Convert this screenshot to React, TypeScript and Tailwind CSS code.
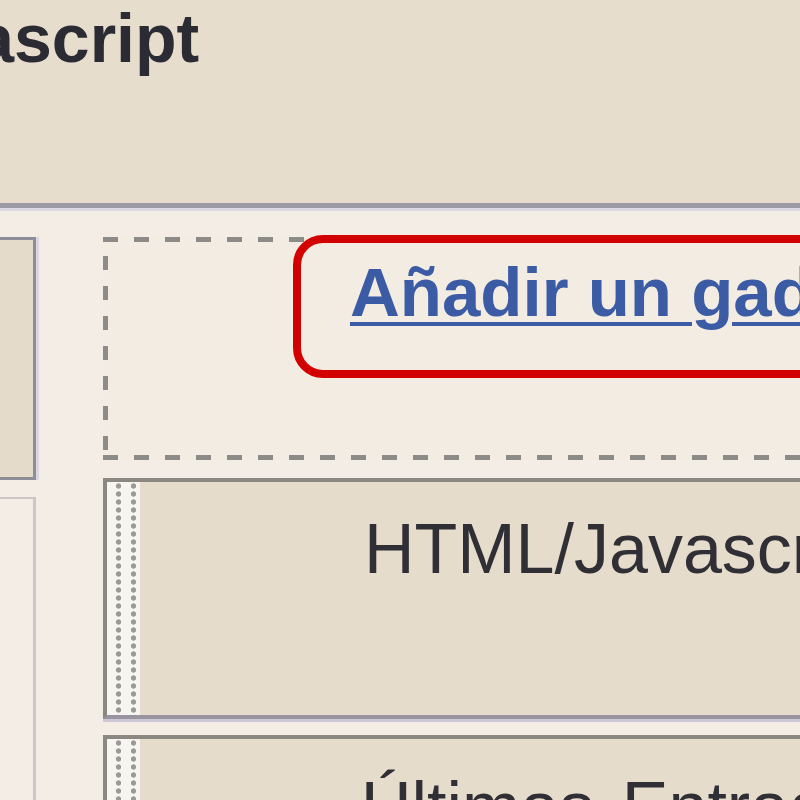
export default function App() {
  return (
    <div className="w-[800px] h-[800px] overflow-hidden bg-[#f3ede5] font-['Liberation_Sans',Arial,sans-serif]">
      {/* page title strip */}
      <div className="h-[203px] overflow-hidden bg-[#e6ddcd]">
        <h2 className="ml-[-345px] mt-[4px] whitespace-nowrap text-[68px] font-bold leading-[68px] text-[#2b2b33]">
          HTML/Javascript
        </h2>
      </div>
      <div className="h-[5px] bg-[#9c9aa2]" />
      <div className="h-[3px] bg-[#dcd8e2]" />

      <div className="flex gap-[67px] pt-[26px]">
        {/* sidebar column */}
        <div className="flex w-[36px] shrink-0 flex-col">
          <div className="h-[243px] border-y-[3px] border-r-[3px] border-[#8f8d97] bg-[#e5dbcb] shadow-[3px_0_0_#dcd6e2]" />
          <div className="mt-[17px] h-[400px] border-t-2 border-r-[3px] border-[#cbc6c8]" />
        </div>

        {/* main column */}
        <div className="flex w-[900px] shrink-0 flex-col">
          {/* dashed drop area */}
          <div className="h-[223px] p-[5px] [background:linear-gradient(90deg,#8d8b88_0_15px,transparent_0)_0_0/31px_5px_repeat-x,linear-gradient(90deg,#8d8b88_0_15px,transparent_0)_0_100%/31px_5px_repeat-x,linear-gradient(#8d8b88_0_14px,transparent_0)_0_19px/5px_30px_repeat-y,#f3ece3]">
            <div className="ml-[185px] -mt-[7px] h-[143px] rounded-[30px] border-[8px] border-[#d30000] pl-[49px] pt-[15px]">
              <a
                href="#"
                className="whitespace-nowrap text-[69px] font-bold leading-[69px] text-[#3b5ba5] underline decoration-[4px] underline-offset-[6px]"
              >
                Añadir un gadget
              </a>
            </div>
          </div>

          <div className="mt-[18px] flex h-[241px] border-[4px] border-[#8b8781] border-b-[#99949f] bg-[#e6dccc] shadow-[0_3px_0_#cdc8d6]">
            <div className="w-[33px] bg-[#f7f5f1] bg-[radial-gradient(circle,#9d9a95_2.3px,transparent_3px)] bg-[length:15px_8px] bg-[position:4px_0]" />
            <div className="whitespace-nowrap pl-[224px] pt-[32px] text-[70px] leading-[70px] text-[#2f2f35]">
              HTML/Javascript
            </div>
          </div>

          <div className="mt-[16px] flex h-[300px] border-[4px] border-[#8b8781] bg-[#e6dccc]">
            <div className="w-[33px] bg-[#f7f5f1] bg-[radial-gradient(circle,#9d9a95_2.3px,transparent_3px)] bg-[length:15px_8px] bg-[position:4px_0]" />
            <div className="whitespace-nowrap pl-[221px] pt-[33px] text-[70px] leading-[70px] text-[#2f2f35] [word-spacing:8px]">
              Últimas Entradas
            </div>
          </div>
        </div>
      </div>
    </div>
  );
}
